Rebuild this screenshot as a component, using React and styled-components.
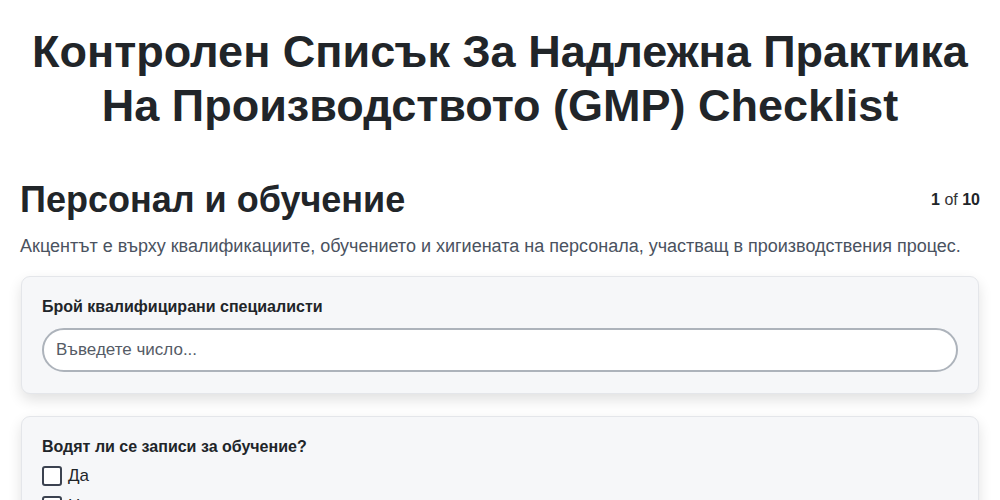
import styled, { createGlobalStyle } from 'styled-components';

const GlobalStyle = createGlobalStyle`
  body {
    margin: 0;
    background: #ffffff;
    font-family: "Liberation Sans", Arial, sans-serif;
    color: #212529;
  }
`;

const Page = styled.div`
  padding: 25px 20px 40px;
`;

const Title = styled.h1`
  margin: 0 0 45px;
  text-align: center;
  font-size: 45px;
  line-height: 54px;
  font-weight: 700;
  color: #212529;
`;

const SectionHead = styled.div`
  display: flex;
  justify-content: space-between;
  align-items: center;
`;

const SectionTitle = styled.h2`
  margin: 0;
  font-size: 36px;
  line-height: 43px;
  font-weight: 700;
  color: #212529;
`;

const Counter = styled.span`
  font-size: 16px;
  color: #333;
  b {
    font-weight: 700;
    color: #212529;
  }
`;

const Description = styled.p`
  margin: 12px 0 17px;
  font-size: 18px;
  line-height: 26px;
  color: #4a5260;
`;

const Questions = styled.div`
  display: flex;
  flex-direction: column;
  gap: 22px;
  padding: 0 1px;
`;

const Card = styled.div`
  background: #f6f7f9;
  border: 1px solid #e4e6ea;
  border-radius: 9px;
  padding: 20px 20px 21px;
  box-shadow: 0 6px 14px rgba(0, 0, 0, 0.12);
`;

const Label = styled.div`
  font-size: 16px;
  font-weight: 700;
  line-height: 20px;
  color: #212529;
  margin-bottom: ${(p) => (p.$tight ? '8px' : '11px')};
`;

const Input = styled.input`
  box-sizing: border-box;
  width: 100%;
  height: 44px;
  border: 2px solid #adb3bb;
  border-radius: 22px;
  background: #fff;
  padding: 0 12px;
  font-family: "Liberation Sans", Arial, sans-serif;
  font-size: 17px;
  color: #212529;
  outline: none;
  &::placeholder {
    color: #555b66;
  }
`;

const Option = styled.label`
  display: flex;
  align-items: center;
  gap: 6px;
  height: 22px;
  margin-bottom: 8px;
  font-size: 17px;
  color: #212529;
`;

const Box = styled.span`
  box-sizing: border-box;
  width: 20px;
  height: 20px;
  border: 2px solid #3b4250;
  border-radius: 3px;
  background: #fff;
`;

export default function App() {
  return (
    <>
      <GlobalStyle />
      <Page>
        <Title>
          Контролен Списък За Надлежна Практика
          <br />
          На Производството (GMP) Checklist
        </Title>
        <SectionHead>
          <SectionTitle>Персонал и обучение</SectionTitle>
          <Counter>
            <b>1</b> of <b>10</b>
          </Counter>
        </SectionHead>
        <Description>
          Акцентът е върху квалификациите, обучението и хигиената на персонала, участващ в производствения процес.
        </Description>
        <Questions>
          <Card>
            <Label>Брой квалифицирани специалисти</Label>
            <Input type="number" placeholder="Въведете число..." />
          </Card>
          <Card>
            <Label $tight>Водят ли се записи за обучение?</Label>
            <Option>
              <Box />
              Да
            </Option>
            <Option>
              <Box />
              Не
            </Option>
          </Card>
        </Questions>
      </Page>
    </>
  );
}
